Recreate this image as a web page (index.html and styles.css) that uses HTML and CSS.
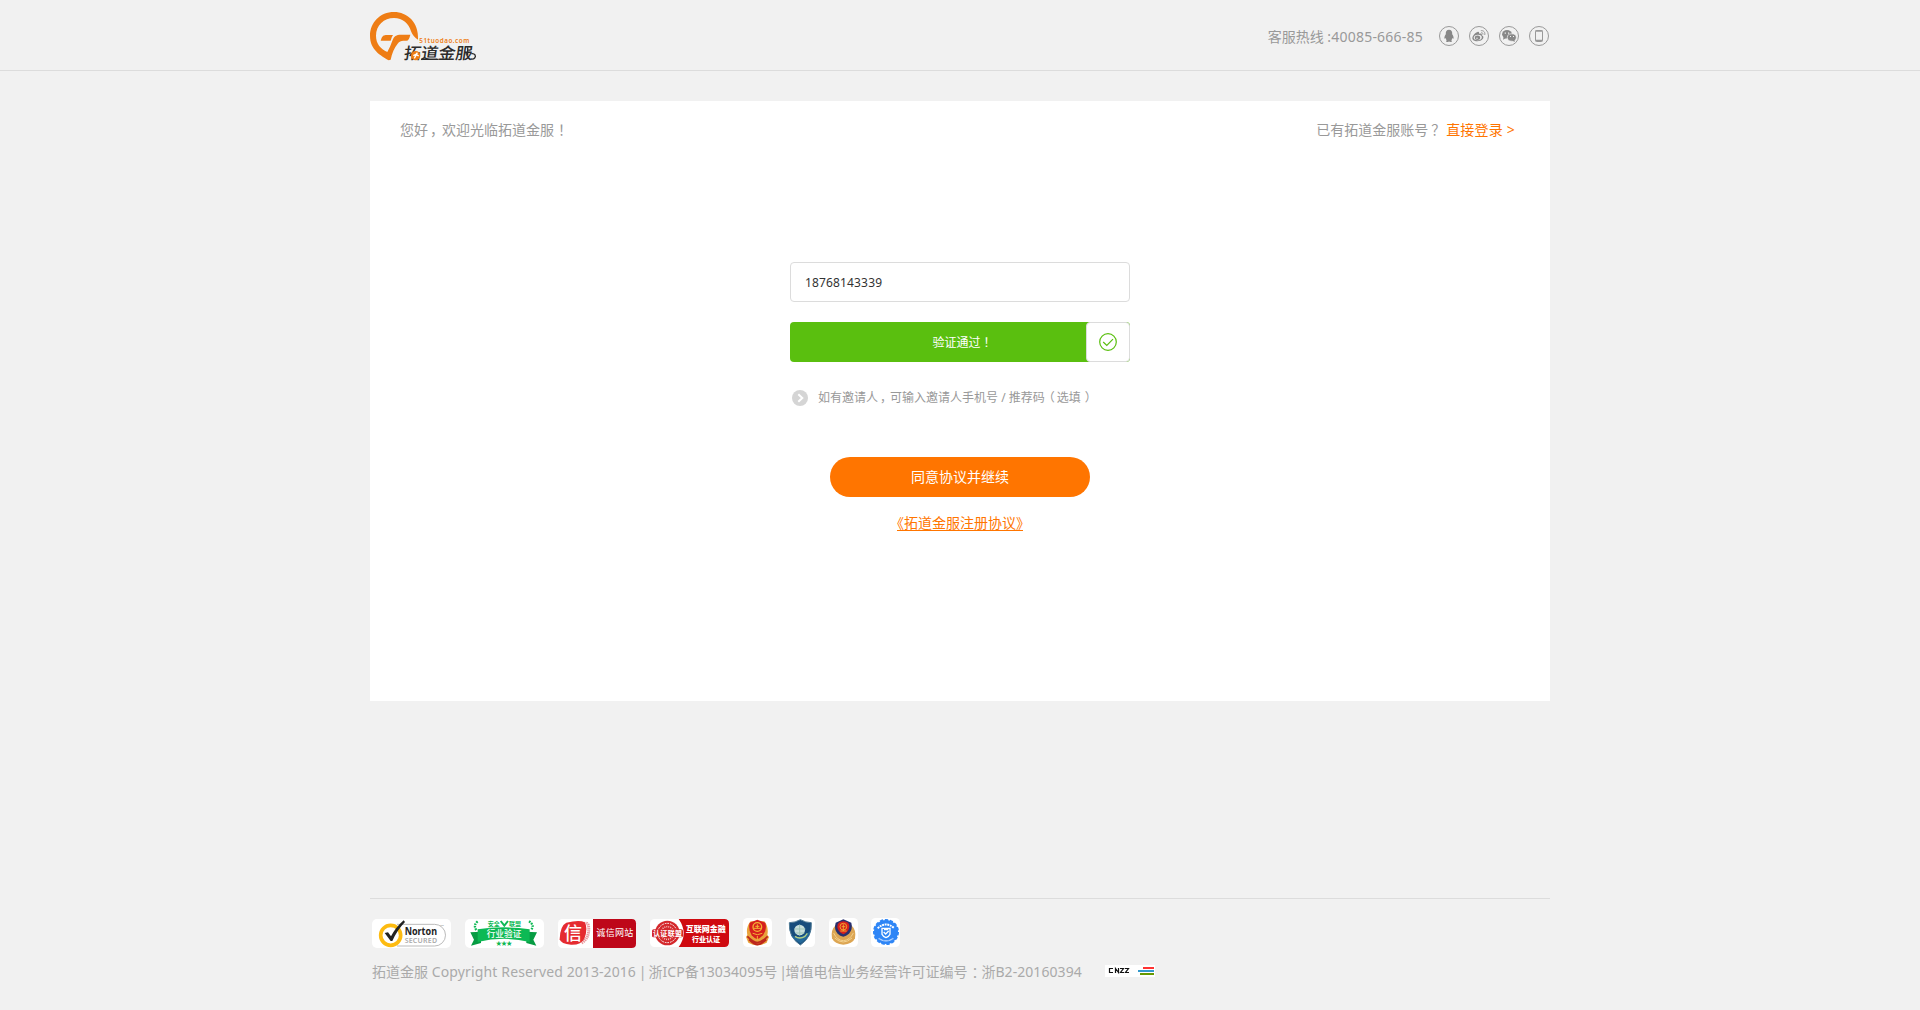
FILE: index.html
```html
<!DOCTYPE html>
<html lang="zh-CN">
<head>
<meta charset="utf-8">
<title>拓道金服</title>
<link rel="stylesheet" href="styles.css">
</head>
<body>
<header class="header">
  <div class="wrap header-in">
    <svg class="logo" viewBox="30 30 330 156" role="img">
      <path fill="#ee7d15" d="M174 119C177 67 142 36 102 36C60 36 30 68 30 107C30 150 62 166 86 181L92 179C96 158 103 144 113 131C118 124 123 122 130 122H139C145 122 148 116 151 104H123C109 104 102 108 97 122C93 134 88 145 82 156C61 146 48 131 48 107C48 76 72 54 102 54C128 54 147 71 153 94C157 105 164 113 174 119ZM62 122L65 113Q68 105 77 105H99Q95 110 92 122Z"/>
      <text class="logo-url" x="178" y="129" textLength="150" lengthAdjust="spacing">51tuodao.com</text>
      <text class="logo-name" transform="translate(130 177) skewX(-8)" textLength="206" lengthAdjust="spacingAndGlyphs">拓道金服</text>
      <path d="M183 178H236M323 142V166M334 161C345 159 349 168 344 174Q340 179 333 177" fill="none" stroke="#2c2c2c" stroke-width="4"/>
      <circle cx="167" cy="167" r="14" fill="#ee7d15"/>
      <path d="M163 175L172 158M160 167L168 163L176 168" stroke="#fff" stroke-width="4" fill="none"/>
    </svg>
    <div class="contact">
      <span class="hotline">客服热线 <span class="tel">:40085-666-85</span></span>
      <svg class="soc" viewBox="0 0 20 20"><circle cx="10" cy="10" r="9.5"/><path class="f" d="M10 3.8C7.6 3.8 6.600 5.600 6.800 8.200C5.800 9.600 5.100 11.200 5.500 12.700C6 12.700 6.400 12.200 6.700 11.900C6.800 13 7.300 13.800 7.800 14.300C6.800 14.600 6.600 15.900 8.200 15.900C9.200 15.900 9.700 15.700 10 15.400C10.300 15.700 10.800 15.900 11.800 15.900C13.400 15.900 13.200 14.600 12.200 14.300C12.700 13.800 13.200 13 13.300 11.900C13.600 12.200 14 12.700 14.500 12.700C14.900 11.200 14.200 9.600 13.200 8.200C13.400 5.600 12.400 3.800 10 3.800Z"/></svg>
      <svg class="soc" viewBox="0 0 20 20"><circle cx="10" cy="10" r="9.500"/><path class="f" fill-rule="evenodd" d="M8.500 6C9.800 5.500 10.400 6.300 10 7.700C12 7 13.300 7.500 12.800 9.200C14.600 9.800 14.900 11.600 13.700 13.100C12 15.300 8 15.900 5.500 14.800C2.900 13.700 2.900 11.300 4.300 9.400C5.400 7.900 7 6.600 8.500 6ZM8.800 8.700C6.100 8.900 4.400 10.400 4.700 12C5 13.600 7 14.500 9.300 14.200C11.500 13.900 13.100 12.500 12.800 10.900C12.500 9.300 10.800 8.600 8.800 8.700Z"/><ellipse class="f" cx="8.500" cy="11.700" rx="2.700" ry="2.200"/><circle cx="8" cy="12.200" r=".7" fill="#f1f1f1" stroke="none"/><path d="M11.800 4.700C14.700 4.200 16.500 6.400 15.700 9M12.200 6.700C13.600 6.500 14.200 7.500 13.900 8.600"/></svg>
      <svg class="soc" viewBox="0 0 20 20"><circle cx="10" cy="10" r="9.500"/><ellipse class="f" cx="8" cy="8.200" rx="4.900" ry="4.200"/><path class="f" d="M4.700 10.500L4 13.700L7.200 12Z"/><ellipse cx="12.800" cy="11.500" rx="4.500" ry="3.700" fill="#888" stroke="#f1f1f1" stroke-width=".7"/><path class="f" d="M13 14.500L15.800 16L15.300 13Z"/><path fill="#f1f1f1" stroke="none" d="M5.700 6.500h1.200v1.200H5.700zM9 6.500h1.200v1.200H9zM11 9.900h1v1h-1zM14 9.900h1v1h-1z"/></svg>
      <svg class="soc" viewBox="0 0 20 20"><circle cx="10" cy="10" r="9.500"/><rect x="6.500" y="4.500" width="7" height="11" rx="1"/><path d="M6.500 5H13.500M6.500 14.500H13.500" stroke-width="1.500"/></svg>
    </div>
  </div>
</header>

<main class="wrap card">
  <div class="card-top">
    <span>您好<span class="comma">，</span>欢迎光临拓道金服<span class="mid">！</span></span>
    <span class="has"><span>已有拓道金服账号<span class="mid">？</span></span><a class="login" href="#">直接登录 &gt;</a></span>
  </div>
  <form class="form">
    <input class="phone" type="text" value="18768143339">
    <div class="verify">
      <span class="verify-text">验证通过<span class="mid">！</span></span>
      <span class="verify-ok"><svg width="18" height="18" viewBox="0 0 18 18"><circle cx="9" cy="9" r="8.300"/><path d="M4.200 9L7.800 12.500L14 6.200"/></svg></span>
    </div>
    <div class="invite">
      <svg width="16" height="16" viewBox="0 0 16 16"><circle cx="8" cy="8" r="8" fill="#d5d5d5"/><path d="M6.300 4.200L10.300 8L6.300 11.800" fill="none" stroke="#fff" stroke-width="2"/></svg>
      <span>如有邀请人<span class="comma">，</span>可输入邀请人手机号 / 推荐码<span class="open">（</span>选填<span class="close">）</span></span>
    </div>
    <button class="go" type="button">同意协议并继续</button>
    <a class="agree" href="#">《拓道金服注册协议》</a>
  </form>
</main>

<footer class="wrap footer">
  <div class="badges">
    <svg class="b1" width="79" height="29" viewBox="0 0 237 87">
      <rect width="237" height="87" rx="15" fill="#fff"/>
      <path d="M75 16H188A32 32 0 0 1 188 81H75" fill="none" stroke="#bbb" stroke-width="3"/>
      <circle cx="56" cy="49" r="30" fill="#fff" stroke="#fdbb11" stroke-width="11"/>
      <path d="M38 42L48 40L57 52Q71 25 95 4L99 9Q75 34 61 66H56Z" fill="#222"/>
      <text x="98" y="47" textLength="97" lengthAdjust="spacingAndGlyphs" font-size="31" font-weight="700" fill="#222">Norton</text>
      <text x="98" y="71" textLength="97" font-size="21" font-weight="600" fill="#aaa">SECURED</text>
      <text x="205" y="20" font-size="7" fill="#777">TM</text>
    </svg>
    <svg class="b2" width="79" height="29" viewBox="0 0 237 87">
      <rect width="237" height="87" rx="15" fill="#fff"/>
      <path d="M16 40L48 38V72L18 80L27 62ZM216 40L184 38V72L214 80L205 62Z" fill="#079c43"/>
      <path d="M38 31Q117 19 194 31V69Q117 50 38 69Z" fill="#0db954"/>
      <path d="M38 7Q24 19 34 33M192 7Q210 19 198 33" fill="none" stroke="#0db954" stroke-width="7" stroke-dasharray="5 3"/>
      <path d="M107 6L118 20L129 6" fill="none" stroke="#0db954" stroke-width="6"/>
      <text x="68" y="20" font-size="18" font-weight="700" fill="#0db954">安全</text><text x="132" y="20" font-size="18" font-weight="700" fill="#0db954">联盟</text>
      <text x="65" y="53" font-size="26" font-weight="500" fill="#fff">行业验证</text>
      <text x="92" y="77" font-size="18" fill="#0db954" textLength="50">★★★</text>
    </svg>
    <svg class="b3" width="78" height="29" viewBox="0 0 234 87">
      <rect width="234" height="87" rx="13" fill="#fff"/>
      <path d="M105 0H221Q234 0 234 13V74Q234 87 221 87H105Z" fill="#be0719"/>
      <path d="M73 16Q91 6 92 25Q94 59 70 72" fill="none" stroke="#e99a9e" stroke-width="9" stroke-dasharray="4 2"/>
      <path d="M25 11Q65 1 80 10Q91 27 79 59Q70 78 39 77Q9 76 5 61Q6 20 25 11Z" fill="#e52b30"/>
      <text x="18" y="62" font-size="54" font-weight="500" fill="#fff">信</text>
      <text x="115" y="51" font-size="27" fill="#fff" textLength="111">诚信网站</text>
    </svg>
    <svg class="b4" width="79" height="28" viewBox="0 0 237 84">
      <rect width="237" height="84" rx="14" fill="#fff"/>
      <path d="M86 0H223Q237 0 237 14V70Q237 84 223 84H86Q116 43 86 0Z" fill="#cf0a10"/>
      <circle cx="52" cy="42" r="37" fill="#d4282c"/><circle cx="52" cy="42" r="29" fill="none" stroke="#fff" stroke-width="3" stroke-dasharray="5 3"/><circle cx="52" cy="42" r="19" fill="none" stroke="#f4b6b6" stroke-width="5" stroke-dasharray="3 3"/>
      <rect x="6" y="31" width="93" height="24" rx="5" fill="#d4282c"/>
      <text x="9" y="51" font-size="21" font-weight="700" fill="#fff" textLength="87">认证联盟</text>
      <text x="107" y="39" font-size="24" font-weight="900" fill="#fff">互联网金融</text>
      <text x="126" y="68" font-size="21" font-weight="900" fill="#fff">行业认证</text>
    </svg>
    <svg class="b5" width="29" height="29" viewBox="0 0 87 87">
      <rect width="87" height="87" rx="14" fill="#fff"/>
      <path d="M23 10Q8 28 13 51L9 57L16 74Q43 89 71 74L78 57L73 51Q78 28 64 10Z" fill="#e9a33c"/>
      <path d="M43 5L67 14Q73 36 60 52Q51 61 43 64Q34 61 26 52Q15 35 20 14Z" fill="#d6201d"/>
      <path d="M13 55Q30 72 43 74Q59 71 74 55M18 65Q34 80 43 80Q56 78 70 65" fill="none" stroke="#bd271d" stroke-width="5"/>
      <circle cx="43" cy="27" r="13" fill="none" stroke="#f5b234" stroke-width="4"/><path d="M33 31H54M37 25H49M43 19V31M29 46Q43 54 58 46M43 54V66" stroke="#f5b234" stroke-width="3" fill="none"/>
    </svg>
    <svg class="b6" width="29" height="29" viewBox="0 0 87 87">
      <rect width="87" height="87" rx="14" fill="#fff"/>
      <path d="M43 5Q59 14 76 14Q79 57 43 81Q7 57 10 14Q28 14 43 5Z" fill="#174c7c" stroke="#527c96" stroke-width="3"/>
      <path d="M14 50Q40 68 74 38Q69 60 43 76Q20 61 14 50Z" fill="#24699a"/>
      <circle cx="41" cy="36" r="16" fill="#c8dedb"/><path d="M25 33H58M29 45H55M41 20V53" stroke="#9cc3b6" stroke-width="3"/>
      <path d="M27 55Q41 65 57 55L64 46" fill="none" stroke="#b4cf83" stroke-width="4"/>
    </svg>
    <svg class="b7" width="29" height="29" viewBox="0 0 87 87">
      <rect width="87" height="87" rx="14" fill="#fff"/>
      <path d="M20 22Q4 37 9 61Q17 79 43 80Q70 79 78 61Q83 37 67 22Z" fill="#dda653"/>
      <path d="M43 4L67 14Q72 34 60 47Q51 54 43 56Q33 54 26 47Q14 34 20 14Z" fill="#29306e"/>
      <path d="M43 10Q62 11 61 27Q59 43 43 49Q27 43 25 27Q25 11 43 10Z" fill="#d6201d"/>
      <circle cx="43" cy="26" r="10" fill="none" stroke="#f2a32e" stroke-width="3"/><path d="M34 39H53M38 26H49M43 19V39" stroke="#f2a32e" stroke-width="3"/>
      <path d="M14 45Q25 68 43 68Q62 67 73 45M17 60Q43 84 69 60" fill="none" stroke="#f3d18e" stroke-width="3"/>
    </svg>
    <svg class="b8" width="29" height="29" viewBox="0 0 87 87">
      <rect width="87" height="87" rx="14" fill="#fff"/>
      <circle cx="45" cy="42" r="36" fill="#2f86f6"/><circle cx="45" cy="42" r="36" fill="none" stroke="#2f86f6" stroke-width="6" stroke-dasharray="10 5"/>
      <path d="M20 31Q44 8 70 31" fill="none" stroke="#fff" stroke-width="6" stroke-dasharray="6 2"/><path d="M23 61Q45 76 67 61" fill="none" stroke="#c5ddff" stroke-width="4" stroke-dasharray="3 1"/>
      <path d="M33 31H57V49Q54 56 45 59Q36 56 33 49ZM38 42L44 48L53 39M39 35H52" fill="none" stroke="#fff" stroke-width="4"/>
    </svg>
  </div>
  <div class="copy">
    <span>拓道金服 <span class="lat">Copyright Reserved</span> <span class="num">2013-2016</span><span class="bar"> | </span>浙<span class="num">ICP</span>备<span class="num">13034095</span>号<span class="bar tight"> |</span>增值电信业务经营许可证编号<span class="mid">：</span>浙<span class="num">B2-20160394</span></span>
    <svg class="cnzz" width="50" height="12" viewBox="0 0 50 12"><rect width="50" height="12" fill="#fff"/><path d="M8 3.500H4.500V7.500H8M10.500 8V3.500L13.500 7.500V3M15 3.500H18.500L15.500 7.500H19M20 3.500H23.500L20.500 7.500H24" fill="none" stroke="#111" stroke-width="1.200"/><path d="M38 2H49V4H38Z" fill="#f33"/><path d="M33 5H49V7H33Z" fill="#39c"/><path d="M35 8H49V10H35Z" fill="#690"/></svg>
  </div>
</footer>
</body>
</html>
```
FILE: styles.css
```css
* { box-sizing: border-box; }
body {
  margin: 0;
  min-height: 1010px;
  display: flex;
  flex-direction: column;
  background: #f1f1f1;
  color: #999;
  font: 14px/20px "Noto Sans", "Noto Sans CJK SC", sans-serif;
  font-weight: 400;
  white-space: nowrap;
}
svg { display: block; flex: none; overflow: visible; }
svg text { font-family: "Noto Sans", "Noto Sans CJK SC", sans-serif; }
.wrap { width: 1180px; margin: 0 auto; }
.header { height: 71px; border-bottom: 1px solid #dcdcdc; }
.header-in { display: flex; justify-content: space-between; }
.logo { width: 110px; height: 52px; margin-top: 10px; }
.logo .logo-url { font-size: 19px; font-weight: 600; fill: #ee7d15; }
.logo .logo-name { font-size: 48px; font-weight: 500; fill: #2c2c2c; }
.contact { display: flex; align-items: center; gap: 10px; height: 72px; padding-right: 1px; }
.hotline { margin-right: 6px; padding-top: 1px; }
.tel { letter-spacing: 0.22px; }
.num { letter-spacing: 0.06px; }
.lat { letter-spacing: 0.15px; }
.bar { letter-spacing: -0.8px; }
.tight { letter-spacing: -1.6px; }
/* full-width punctuation centred in its square */
.mid { margin: 0 -4px 0 4px; }
.verify-text .mid { margin: 0 -3px 0 3px; }
.comma { margin: 0 -2px 0 2px; }
.open { margin: 0 2px 0 -2px; }
.close { margin: 0 -4px 0 4px; }
.soc { width: 20px; height: 20px; fill: none; stroke: #999; stroke-width: 1; }
.soc .f { fill: #888; stroke: none; }
.card { height: 600px; margin-top: 30px; background: #fff; }
.card-top { display: flex; justify-content: space-between; padding: 19px 35px 0 30px; }
.has { display: flex; gap: 7px; }
.login { color: #ff7500; text-decoration: none; letter-spacing: 0.2px; }
.has .mid { margin: 0 -3px 0 3px; }
.form { width: 340px; margin: 122px auto 0; display: flex; flex-direction: column; align-items: center; }
.has { gap: 4px; }
.phone {
  width: 340px; height: 40px; padding: 0 14px;
  border: 1px solid #dcdcdc; border-radius: 4px; background: #fff;
  color: #333; font: 12px "Noto Sans", sans-serif; letter-spacing: 0.15px; outline: none;
}
.verify {
  width: 340px; height: 40px; margin-top: 20px; padding-left: 49px;
  display: flex; align-items: center; justify-content: space-between;
  border-radius: 4px; background: #5abf0f; color: #fff; font-size: 12px;
}
.verify-text { flex: 1; text-align: center; padding-top: 2px; }
.verify-ok {
  width: 44px; height: 40px; display: flex; align-items: center; justify-content: center;
  border: 1px solid #dcdcdc; border-radius: 4px; background: #fff;
}
.verify-ok svg { fill: none; stroke: #5abf0f; stroke-width: 1.2; }
.invite { align-self: flex-start; display: flex; align-items: center; gap: 10px; height: 20px; margin: 26px 0 0 2px; font-size: 12px; }
.go {
  width: 260px; height: 40px; margin-top: 49px; padding: 0; border: 0; border-radius: 20px;
  background: #ff7500; color: #fff; font: 14px/40px "Noto Sans", "Noto Sans CJK SC", sans-serif;
}
.agree { margin-top: 15px; color: #ff7500; font-family: "Noto Sans CJK SC", sans-serif; font-feature-settings: "halt"; text-underline-offset: 2px; }
.footer { margin-top: 197px; border-top: 1px solid #dcdcdc; padding: 19px 0 0 2px; color: #aaa; }
.badges { display: flex; align-items: flex-start; height: 30px; }
.b1, .b2, .b3, .b4 { margin-top: 1px; }
.b1, .b2, .b3, .b4, .b5, .b6, .b7 { margin-right: 14px; }
.b8 { margin-left: -1px; }
.copy { display: flex; align-items: center; margin-top: 14px; }
.cnzz { margin: -2px 0 0 23px; }
```
